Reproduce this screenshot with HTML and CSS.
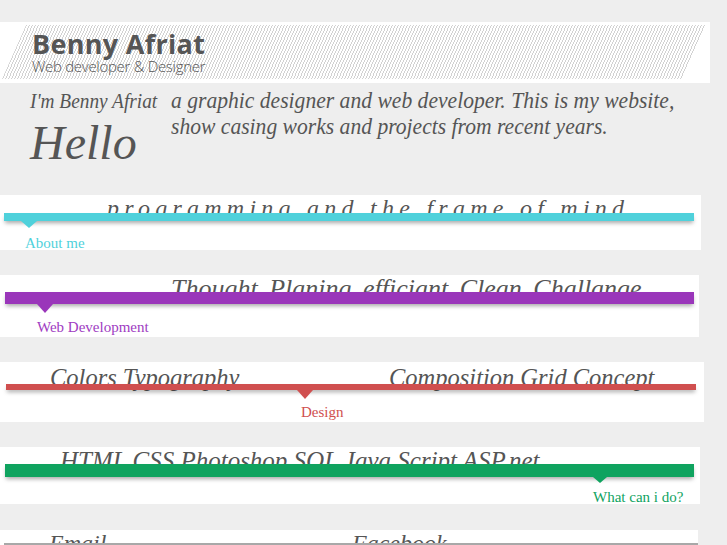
FILE: index.html
```html
<!DOCTYPE html>
<html lang="en">
<head>
<meta charset="utf-8">
<title>Benny Afriat</title>
<link rel="stylesheet" href="styles.css">
</head>
<body>
<header class="header">
  <div class="hatch"></div>
  <div class="brand">
    <h1>Benny Afriat</h1>
    <p>Web developer &amp; Designer</p>
  </div>
</header>

<section class="intro">
  <div class="intro-left">
    <div class="im"><span>I'm Benny Afriat</span></div>
    <div class="hello">Hello</div>
  </div>
  <div class="intro-text"><span>a graphic designer and web developer. This is my website,</span><span>show casing works and projects from recent years.</span></div>
</section>

<section class="sec about">
  <div class="words">programming and the frame of mind</div>
  <div class="bar"></div>
  <div class="label">About me</div>
</section>

<section class="sec web">
  <div class="words">Thought Planing efficiant Clean Challange</div>
  <div class="bar"></div>
  <div class="label">Web Development</div>
</section>

<section class="sec design">
  <div class="words"><span>Colors Typography</span><span>Composition Grid Concept</span></div>
  <div class="bar"></div>
  <div class="label">Design</div>
</section>

<section class="sec skills">
  <div class="words">HTML CSS Photoshop SQL Java Script ASP.net</div>
  <div class="bar"></div>
  <div class="label">What can i do?</div>
</section>

<section class="sec contact">
  <div class="words"><span>Email</span><span>Facebook</span></div>
  <div class="bar"></div>
</section>
</body>
</html>
```

FILE: styles.css
```css
html, body {
  margin: 0;
  padding: 0;
  background: #eeeeee;
  font-family: "Liberation Serif", "Times New Roman", serif;
  color: #555;
  overflow: hidden;
}

/* Header */
.header {
  margin-top: 22px;
  width: 710px;
  height: 61px;
  background: #fff;
  display: grid;
}
.hatch {
  grid-area: 1 / 1;
  width: 680px;
  height: 54px;
  margin: 3px 0 0 14px;
  transform: skewX(-24deg);
  background: repeating-linear-gradient(90deg, #d2d2d2 0 1px, #fff 1px 3px);
}
.brand {
  grid-area: 1 / 1;
  padding: 8px 0 0 32px;
  font-family: "Open Sans", "Liberation Sans", sans-serif;
  color: #555;
  position: relative;
}
.brand h1 {
  margin: 0;
  font-size: 27px;
  line-height: 27px;
  font-weight: 700;
  letter-spacing: 0.3px;
}
.brand p {
  margin: 1px 0 0;
  font-size: 15px;
  line-height: 16px;
  font-weight: 300;
  letter-spacing: -0.3px;
}

/* Intro */
.intro {
  display: flex;
  height: 112px;
  padding-left: 30px;
  font-style: italic;
  color: #555;
}
.intro-left {
  flex: none;
  width: 141px;
}
.im {
  margin-top: 6px;
  font-size: 21px;
  line-height: 24px;
  white-space: nowrap;
}
.im span {
  display: inline-block;
  transform: scaleX(0.92);
  transform-origin: left;
}
.hello {
  margin-top: 6px;
  font-size: 48px;
  line-height: 48px;
}
.intro-text {
  margin-top: 4px;
  font-size: 24px;
  line-height: 26px;
  white-space: nowrap;
  display: flex;
  flex-direction: column;
  align-items: flex-start;
}
.intro-text span {
  display: block;
  transform: scaleX(0.9);
  transform-origin: left;
}

/* Sections */
.sec {
  background: #fff;
}
.words {
  font-style: italic;
  color: #555;
  white-space: nowrap;
}
.bar {
  position: relative;
  box-shadow: 0 3px 4px -1px rgba(0, 0, 0, 0.35);
}
.bar::after {
  content: "";
  position: absolute;
  top: 100%;
  border-left: 8px solid transparent;
  border-right: 8px solid transparent;
  border-top: 8px solid currentColor;
}
.label {
  font-size: 15px;
  line-height: 18px;
}

/* About */
.about {
  width: 701px;
  height: 55px;
}
.about .words {
  height: 18px;
  line-height: 26px;
  padding-left: 107px;
  font-size: 24px;
  letter-spacing: 5.25px;
}
.about .bar {
  margin-left: 4px;
  width: 690px;
  height: 8px;
  background: #4fd1db;
  color: #4fd1db;
}
.about .bar::after {
  left: 17px;
  border-top-width: 7px;
}
.about .label {
  margin-top: 13px;
  padding-left: 25px;
  color: #4fd1db;
}

/* Web */
.web {
  margin-top: 25px;
  width: 699px;
  height: 62px;
}
.web .words {
  height: 17px;
  line-height: 28px;
  padding-left: 171px;
  font-size: 26px;
  word-spacing: 5px;
}
.web .bar {
  margin-left: 5px;
  width: 689px;
  height: 12px;
  background: #9a36ba;
  color: #9a36ba;
}
.web .bar::after {
  left: 32px;
  border-top-width: 9px;
}
.web .label {
  margin-top: 14px;
  padding-left: 37px;
  color: #a03cc2;
}

/* Design */
.design {
  margin-top: 25px;
  width: 704px;
  height: 60px;
}
.design .words {
  display: grid;
  grid-template-columns: 339px auto;
  height: 22px;
  line-height: 32px;
  padding-left: 50px;
  font-size: 24.5px;
}
.design .bar {
  margin-left: 6px;
  width: 690px;
  height: 6px;
  background: #d04f4f;
  color: #d04f4f;
}
.design .bar::after {
  left: 291px;
  border-top-width: 9px;
}
.design .label {
  margin-top: 13px;
  padding-left: 301px;
  color: #d04f4f;
}

/* Skills */
.skills {
  margin-top: 25px;
  width: 700px;
  height: 57px;
}
.skills .words {
  height: 17px;
  line-height: 27px;
  padding-left: 60px;
  font-size: 25px;
}
.skills .bar {
  margin-left: 5px;
  width: 689px;
  height: 13px;
  background: #0fa35f;
  color: #0fa35f;
}
.skills .bar::after {
  left: 588px;
  border-left-width: 7px;
  border-right-width: 7px;
  border-top-width: 6px;
}
.skills .label {
  margin-top: 11px;
  padding-left: 593px;
  color: #0fa35f;
}

/* Contact */
.contact {
  margin-top: 26px;
  width: 698px;
  height: 30px;
}
.contact .words {
  display: grid;
  grid-template-columns: 303px auto;
  height: 13px;
  line-height: 26px;
  padding-left: 49px;
  font-size: 24px;
}
.contact .bar {
  margin-left: 4px;
  width: 694px;
  height: 2px;
  background: #a8a8a8;
  box-shadow: none;
}
.contact .bar::after {
  display: none;
}
```
